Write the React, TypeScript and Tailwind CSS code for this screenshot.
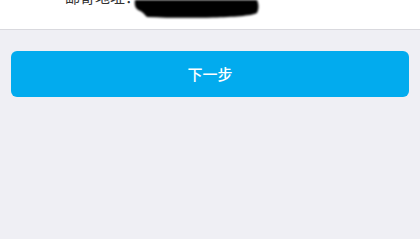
import React from 'react';

const Scribble: React.FC = () => (
  <svg width="128" height="20" viewBox="0 0 128 20" className="block shrink-0">
    <defs>
      <filter id="soft" x="-10%" y="-20%" width="120%" height="140%">
        <feGaussianBlur stdDeviation="0.9" />
      </filter>
    </defs>
    <path
      d="M2 0 L124 0 C126 4 126 9 124 13 C118 16 100 17 80 17.5 C60 18 35 18 14 17 C11 14 10 12 6 10.5 C3 9 1 6 2 0 Z"
      fill="#050505"
      filter="url(#soft)"
    />
  </svg>
);

export default function App() {
  return (
    <div
      className="w-[420px] h-[239px] overflow-hidden bg-[#efeff4]"
      style={{ fontFamily: '"Noto Sans CJK SC", "Noto Sans", sans-serif' }}
    >
      {/* 地址行 */}
      <div className="flex items-start h-[30px] bg-white border-b border-[#d9d9de]">
        <div className="flex items-start -mt-[13px] pl-[65px]">
          <span className="text-[15px] leading-[20px] text-[#333333] whitespace-nowrap">邮寄地址：</span>
          <div className="mt-[13px] -ml-[7px]">
            <Scribble />
          </div>
        </div>
      </div>

      {/* 下一步 */}
      <div className="px-[11px] pt-[21px]">
        <button className="w-full h-[46px] rounded-[6px] bg-[#02abee] text-white text-[15px] font-medium flex items-center justify-center">
          下一步
        </button>
      </div>
    </div>
  );
}
